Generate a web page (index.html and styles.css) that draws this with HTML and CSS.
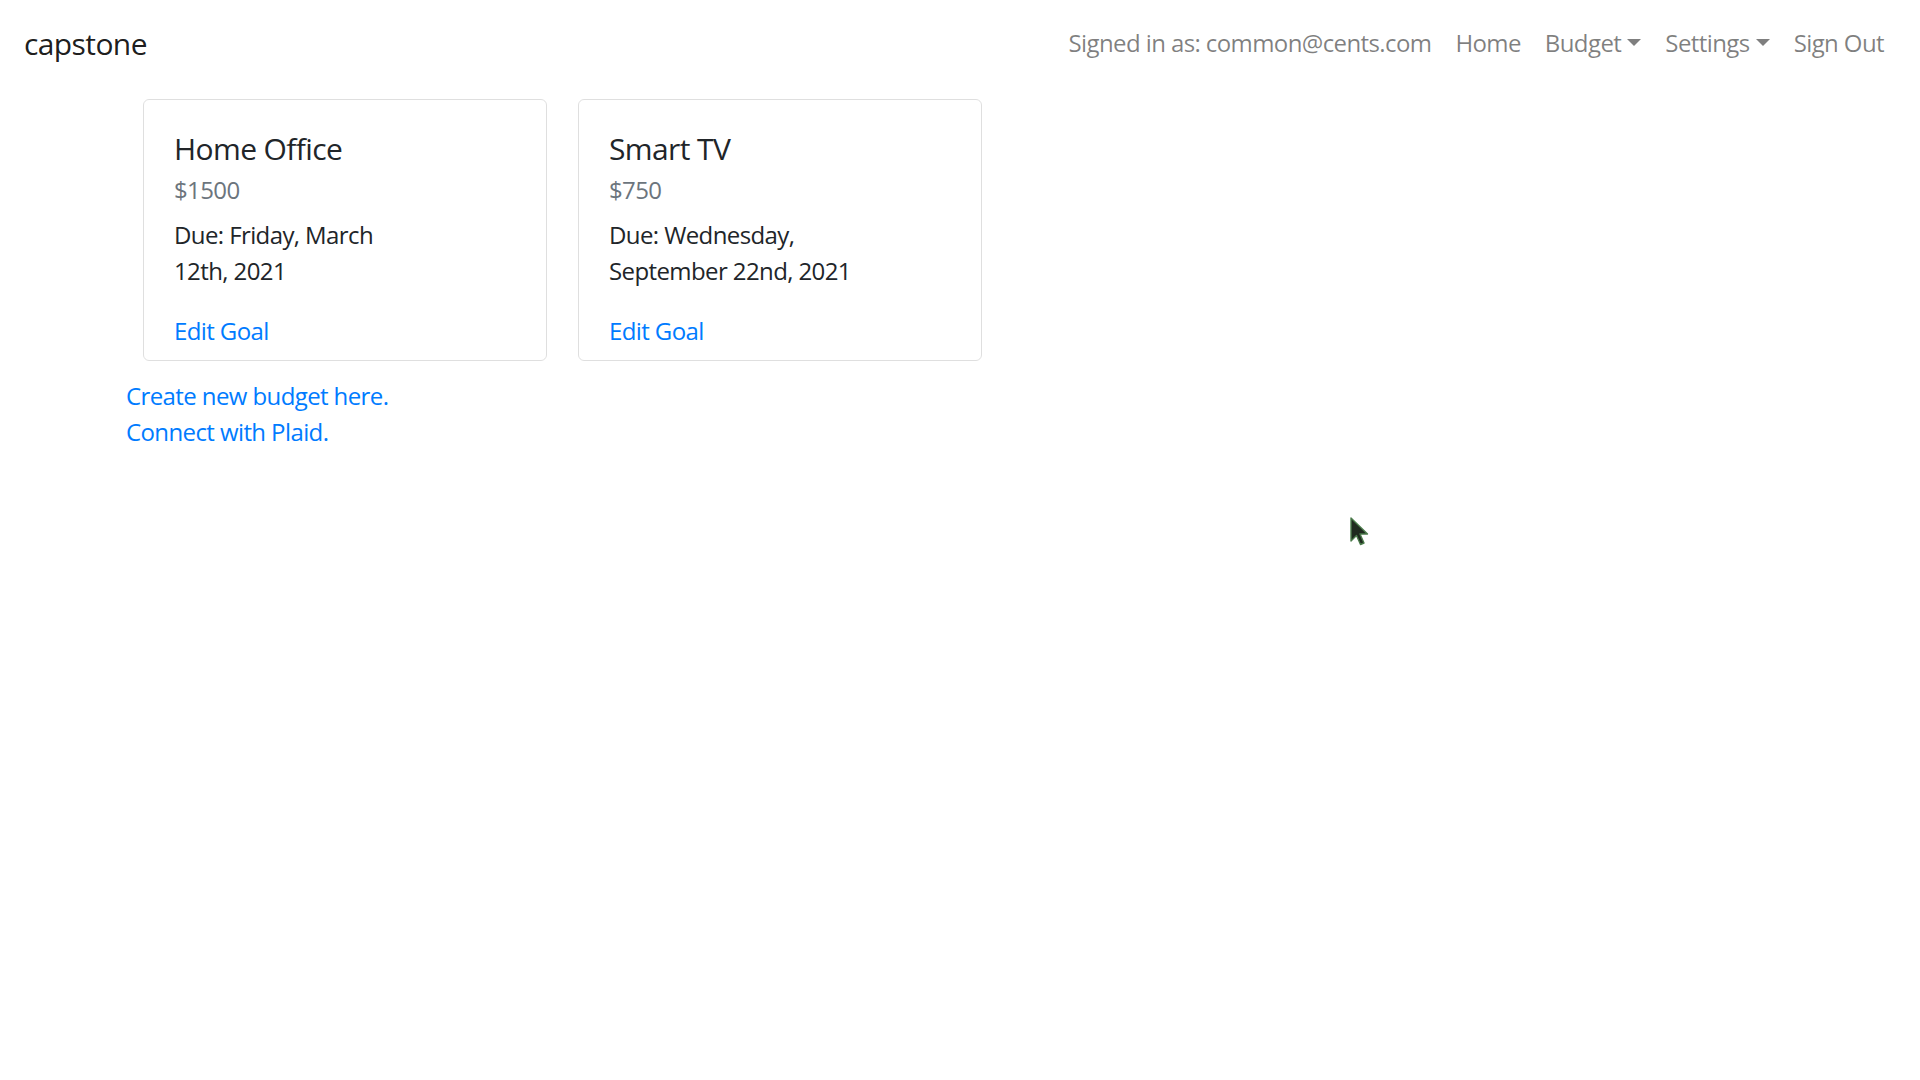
FILE: index.html
```html
<!DOCTYPE html>
<html lang="en">
<head>
<meta charset="utf-8">
<title>capstone</title>
<link rel="stylesheet" href="styles.css">
</head>
<body>
<nav class="navbar">
  <a class="brand" href="#">capstone</a>
  <ul class="nav">
    <li class="nav-text">Signed in as: common@cents.com</li>
    <li><a class="nav-link" href="#">Home</a></li>
    <li><a class="nav-link dropdown" href="#">Budget</a></li>
    <li><a class="nav-link dropdown" href="#">Settings</a></li>
    <li><a class="nav-link" href="#">Sign Out</a></li>
  </ul>
</nav>
<main class="main">
  <div class="cards">
    <div class="card">
      <h5 class="card-title">Home Office</h5>
      <h6 class="card-subtitle">$1500</h6>
      <p class="card-text">Due: Friday, March 12th, 2021</p>
      <a class="card-link" href="#">Edit Goal</a>
    </div>
    <div class="card">
      <h5 class="card-title">Smart TV</h5>
      <h6 class="card-subtitle">$750</h6>
      <p class="card-text">Due: Wednesday, September 22nd, 2021</p>
      <a class="card-link" href="#">Edit Goal</a>
    </div>
  </div>
  <div class="links">
    <a href="#">Create new budget here.</a>
    <a href="#">Connect with Plaid.</a>
  </div>
</main>
<svg class="cursor" width="22" height="30" viewBox="0 0 22 30"><path d="M2 1 L2 24 L7.5 18.5 L11.5 27.5 L15 26 L11 17 L18.5 17 Z" fill="#1f2a1f" stroke="#4a7a4a" stroke-width="1.4" stroke-linejoin="round"/></svg>
</body>
</html>
```

FILE: styles.css
```css
* { box-sizing: border-box; }
html, body { margin: 0; padding: 0; }
body {
  font-family: "Segoe UI", "Open Sans", "Noto Sans", sans-serif;
  font-size: 24px;
  line-height: 1.5;
  letter-spacing: -0.6px;
  color: #212529;
  background: #fff;
  position: relative;
  min-height: 1080px;
}
a { color: #007bff; text-decoration: none; }

.navbar {
  display: flex;
  align-items: center;
  justify-content: space-between;
  padding: 13px 24px 13px;
  height: 86px;
}
.brand {
  font-size: 30px;
  line-height: 45px;
  color: rgba(0,0,0,.9);
}
.nav {
  display: flex;
  list-style: none;
  margin: 0;
  padding: 0;
}
.nav-text, .nav-link {
  display: block;
  padding: 12px;
  color: rgba(0,0,0,.5);
}
.dropdown::after {
  content: "";
  display: inline-block;
  margin-left: .255em;
  vertical-align: .255em;
  border-top: .3em solid;
  border-right: .3em solid transparent;
  border-left: .3em solid transparent;
  border-bottom: 0;
}

.main { padding-left: 126px; }
.cards {
  display: flex;
  gap: 31px;
  padding: 13px 0 17px 17px;
}
.card {
  width: 404px;
  height: 262px;
  border: 1px solid rgba(0,0,0,.125);
  border-radius: 6px;
  padding: 31px 30px 12px;
}
.card-title {
  margin: 0 0 18px;
  font-size: 30px;
  font-weight: 500;
  line-height: 1.2;
}
.card-subtitle {
  margin: -9px 0 12px;
  font-size: 24px;
  font-weight: 400;
  line-height: 1.2;
  color: #6c757d;
}
.card-text {
  margin: 0 0 24px;
  max-width: 250px;
}
.card-link { display: inline-block; }

.links { display: flex; flex-direction: column; align-items: flex-start; }

.cursor { position: absolute; left: 1349px; top: 517px; }
```
